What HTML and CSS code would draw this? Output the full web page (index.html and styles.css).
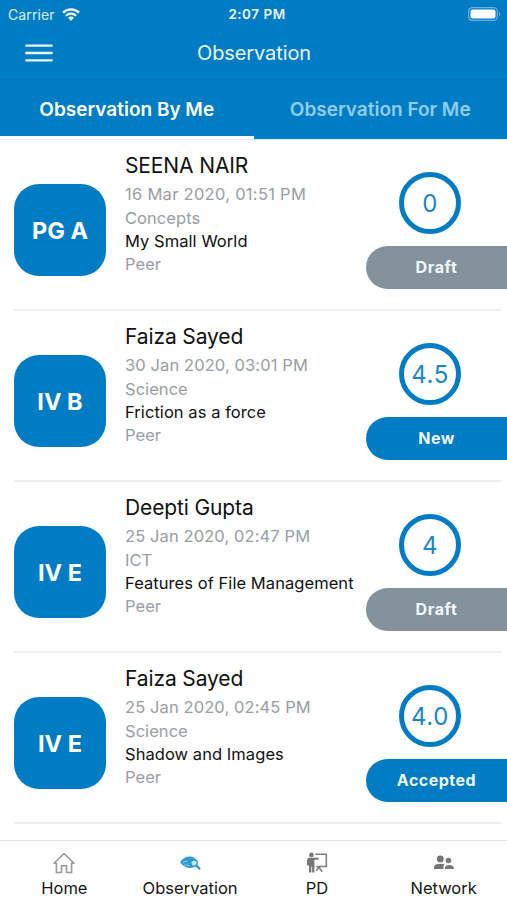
FILE: index.html
```html
<!DOCTYPE html>
<html lang="en">
<head>
<meta charset="utf-8">
<title>Observation</title>
<link rel="stylesheet" href="styles.css">
</head>
<body>
<div class="app">
  <header class="header">
    <div class="status">
      <div class="carrier"><span>Carrier</span>
        <svg width="18" height="13" viewBox="0 0 18 13" fill="none" stroke="#fff" stroke-width="2.3"><path d="M1 4.6a11.4 11.4 0 0 1 16 0M3.9 7.7a7.3 7.3 0 0 1 10.2 0"/><path d="M9 12.7 6.1 9.8a4.2 4.2 0 0 1 5.8 0z" fill="#fff" stroke="none"/></svg>
      </div>
      <span class="time">2:07 PM</span>
      <svg class="battery" width="33" height="14" viewBox="0 0 33 14"><rect x=".7" y=".7" width="28.6" height="12.6" rx="3.6" fill="none" stroke="#69b3df" stroke-width="1.2"/><rect x="2.5" y="2.5" width="25" height="9" rx="2" fill="#fff"/><path d="M31 5v4.2q1.4-.7 1.4-2.1T31 5z" fill="#69b3df"/></svg>
    </div>
    <div class="navbar">
      <svg class="menu" width="28" height="18" viewBox="0 0 28 18" stroke="#e8f7ff" stroke-width="2.3" stroke-linecap="round"><path d="M1.2 1.7h25.6M1.2 9h25.6M1.2 16.3h25.6"/></svg>
      <h1 class="title">Observation</h1>
    </div>
    <nav class="tabs">
      <div class="tab active">Observation By Me</div>
      <div class="tab">Observation For Me</div>
    </nav>
  </header>
  <main class="list">
    <article class="row">
      <div class="badge">PG A</div>
      <div class="info"><h2>SEENA NAIR</h2><p class="date wide">16 Mar 2020, 01:51 PM</p><p>Concepts</p><p class="topic">My Small World</p><p>Peer</p></div>
      <div class="side"><div class="score">0</div><div class="pill draft">Draft</div></div>
    </article>
    <article class="row">
      <div class="badge">IV B</div>
      <div class="info"><h2>Faiza Sayed</h2><p class="date">30 Jan 2020, 03:01 PM</p><p>Science</p><p class="topic">Friction as a force</p><p>Peer</p></div>
      <div class="side"><div class="score">4.5</div><div class="pill">New</div></div>
    </article>
    <article class="row">
      <div class="badge">IV E</div>
      <div class="info"><h2>Deepti Gupta</h2><p class="date">25 Jan 2020, 02:47 PM</p><p>ICT</p><p class="topic">Features of File Management</p><p>Peer</p></div>
      <div class="side"><div class="score">4</div><div class="pill draft">Draft</div></div>
    </article>
    <article class="row">
      <div class="badge">IV E</div>
      <div class="info"><h2>Faiza Sayed</h2><p class="date">25 Jan 2020, 02:45 PM</p><p>Science</p><p class="topic">Shadow and Images</p><p>Peer</p></div>
      <div class="side"><div class="score">4.0</div><div class="pill">Accepted</div></div>
    </article>
  </main>
  <footer class="bottom">
    <div class="item">
      <svg width="22" height="22" viewBox="0 0 22 22" fill="none" stroke="#999" stroke-width="1.6" stroke-linejoin="round"><path d="M1 11.2 11 1.5l10 9.7h-2.4v9.3h-5.1v-6.7h-5v6.7H3.4v-9.3z"/></svg>
      <span>Home</span>
    </div>
    <div class="item">
      <svg width="22" height="22" viewBox="0 0 22 22"><path d="M1 10.2Q5.2 4.2 10.7 4.5q5.1.2 7.7 4.8l-.7 4.6q-5.8 3.8-11.2.9Q3.4 13.6 1 10.2z" fill="#329bd5"/><path d="M3.7 10.6Q6 9 8.6 9.4M5.2 12.2q2.6 1.6 5.2 1.2" fill="none" stroke="#8bc9eb" stroke-width=".9"/><circle cx="15" cy="11" r="3.2" fill="#c4e5f6" stroke="#2793d1" stroke-width="1.3"/><path d="m17.5 13.6 2.9 3" stroke="#2793d1" stroke-width="2.2" stroke-linecap="round"/></svg>
      <span>Observation</span>
    </div>
    <div class="item">
      <svg width="22" height="22" viewBox="0 0 22 22"><circle cx="5.4" cy="2.9" r="2.3" fill="#777"/><path d="M2.2 5.8h10.4v2H8.4v12.8H6.1v-6h-.8v6H3v-7H1V8.2z" fill="#777"/><path d="M9.3 2.2h11v12.3H10.2M13.2 14.5l-3 4.4M12.6 14.5l3.4 5.4" fill="none" stroke="#808080" stroke-width="1.6"/></svg>
      <span>PD</span>
    </div>
    <div class="item">
      <svg width="22" height="22" viewBox="0 0 22 22" fill="#757575"><circle cx="7.3" cy="6.9" r="3.4"/><circle cx="15.5" cy="8.5" r="2.8"/><path d="M1 17.1V15q.8-3.3 6.5-3.3 2.4 0 4 .9-1.2 1.2-1 2.4v2.1zM12 17.1v-1.6q.4-2.6 4-2.6 4.1 0 4.8 2.6v1.6z"/></svg>
      <span>Network</span>
    </div>
  </footer>
</div>
</body>
</html>
```

FILE: styles.css
```css
* { box-sizing: border-box; margin: 0; padding: 0; }
body { background: #fff; font-family: Inter, "Liberation Sans", sans-serif; color: #111; }
.app { width: 507px; height: 900px; display: flex; flex-direction: column; overflow: hidden; }
.header { height: 140px; flex: none; background: #007cc5; color: #fff; border-bottom: 1px solid #d9f1fb; }
.status { height: 27px; display: grid; grid-template-columns: 1fr auto 1fr; align-items: center; padding: 0 6px 0 8px; font-size: 14px; line-height: 27px; }
.carrier { display: flex; align-items: center; gap: 7px; color: #d9f1ff; letter-spacing: .1px; }
.time { font-weight: 600; font-size: 13.5px; letter-spacing: .5px; color: #ecf8ff; padding: 1px 0 0 5px; }
.battery { justify-self: end; }
.navbar { height: 53px; display: grid; grid-template-columns: 80px 1fr 80px; align-items: center; border-bottom: 1px solid #0074b9; }
.menu { display: block; margin: -1px 0 0 25px; }
.title { text-align: center; font-size: 20px; font-weight: 400; line-height: 24px; letter-spacing: -.1px; padding-left: 1px; color: #e8f7ff; }
.tabs { display: flex; height: 59px; }
.tab { width: 254px; padding-top: 3px; display: flex; align-items: center; justify-content: center; font-size: 19px; font-weight: 600; line-height: 52px; color: #8fcdf0; border-bottom: 3px solid #007cc5; }
.tab.active { color: #fff; border-bottom-color: #fff; }
.list { flex: 1; min-height: 0; overflow: hidden; }
.row { height: 171px; margin-left: 14px; display: flex; position: relative; }
.row::after { content: ""; position: absolute; left: 0; right: 6px; bottom: 0; height: 2px; background: #edf0f1; }
.badge { width: 92px; height: 92px; margin-top: 44px; padding-top: 1px; border-radius: 25px; background: #007cc5; color: #fff; display: flex; align-items: center; justify-content: center; font-size: 23.5px; font-weight: 700; }
.info { flex: 1; min-width: 0; padding: 12px 0 0 19px; white-space: nowrap; }
.info h2 { font-size: 21px; font-weight: 400; line-height: 27px; letter-spacing: -.12px; margin-bottom: 4.3px; color: #111; }
.info p { font-size: 16.5px; line-height: 23.3px; letter-spacing: .05px; color: #989ea4; }
.info .date { letter-spacing: .1px; }
.info .date.wide { letter-spacing: .28px; }
.info .topic { color: #111; letter-spacing: .06px; }
.side { width: 141px; padding-top: 32px; }
.score { width: 62px; height: 62px; margin-left: 33px; border: 5px solid #007cc5; border-radius: 50%; color: #1a86c8; font-size: 24px; font-weight: 400; letter-spacing: .6px; display: flex; align-items: center; justify-content: center; }
.pill { height: 43px; margin-top: 12px; padding-bottom: 2px; border-radius: 22px 0 0 22px; background: #007cc5; color: #f0f9ff; font-size: 16px; font-weight: 700; letter-spacing: .5px; display: flex; align-items: center; justify-content: center; }
.pill.draft { background: #84929d; letter-spacing: .7px; }
.bottom { height: 60px; flex: none; display: grid; grid-template-columns: repeat(4, 1fr); border-top: 1px solid #e3e6e7; background: #fff; }
.item { display: flex; flex-direction: column; align-items: center; padding-top: 11px; font-size: 16.5px; line-height: 22px; gap: 3px; color: #151515; }
.item:first-child { padding-left: 2px; }
.item svg { display: block; }
```
